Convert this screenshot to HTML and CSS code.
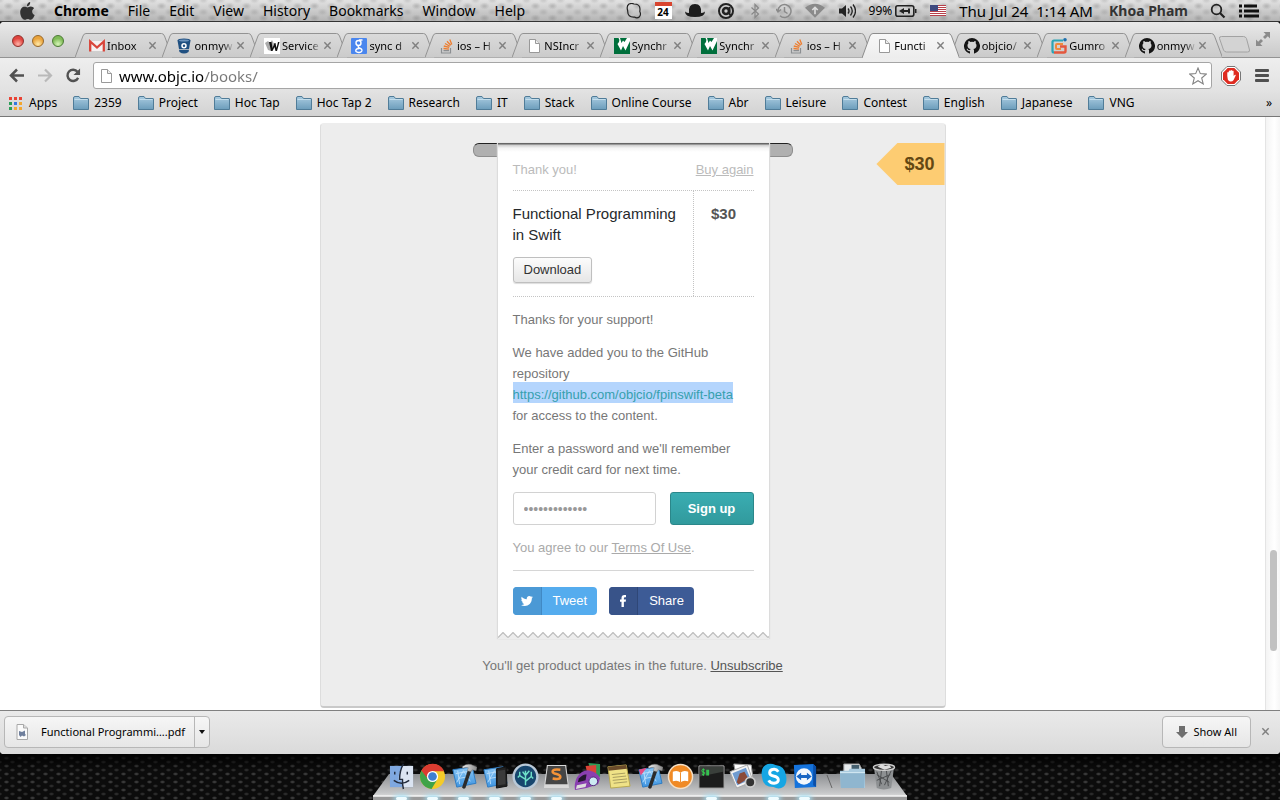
FILE: index.html
```html
<!DOCTYPE html>
<html lang="en">
<head>
<meta charset="utf-8">
<title>Functional Programming in Swift</title>
<link rel="stylesheet" href="styles.css">
</head>
<body>
<svg class="defs" aria-hidden="true">
  <defs>
    <linearGradient id="gFolder" x1="0" y1="0" x2="0" y2="1"><stop offset="0" stop-color="#a9cbe0"/><stop offset="1" stop-color="#6c9dbb"/></linearGradient>
    <linearGradient id="gTab" x1="0" y1="0" x2="0" y2="1"><stop offset="0" stop-color="#dadada"/><stop offset="1" stop-color="#cbcbcb"/></linearGradient>
    <linearGradient id="gTabOn" x1="0" y1="0" x2="0" y2="1"><stop offset="0" stop-color="#f8f8f8"/><stop offset="1" stop-color="#ededed"/></linearGradient>
    <linearGradient id="gShelf" x1="0" y1="0" x2="0" y2="1"><stop offset="0" stop-color="#8d8f92"/><stop offset=".85" stop-color="#c6c7c8"/><stop offset="1" stop-color="#d8d8d8"/></linearGradient>
    <linearGradient id="gBlue" x1="0" y1="0" x2="0" y2="1"><stop offset="0" stop-color="#8cc8f6"/><stop offset="1" stop-color="#3e94e0"/></linearGradient>
    <linearGradient id="gSteel" x1="0" y1="0" x2="1" y2="0"><stop offset="0" stop-color="#eee"/><stop offset="1" stop-color="#888"/></linearGradient>
  </defs>
  <symbol id="folder" viewBox="0 0 16 14"><path d="M.5 13.500V2q0-1.500 1.500-1.500h4L7.500 2.500H15q.5 0 .5.5v10.500z" fill="url(#gFolder)" stroke="#507c98"/><path d="M1.500 3.500h13" stroke="#c4deec"/></symbol>
  <symbol id="page" viewBox="0 0 16 16"><path d="M3.500 1.500h6l4 4v9h-10z" fill="#fff" stroke="#999"/><path d="M9.500 1.500v4h4" fill="#eee" stroke="#999"/></symbol>
  <symbol id="close" viewBox="0 0 10 10"><path d="M1.500 1.500l7 7M8.500 1.500l-7 7" stroke="#808080" stroke-width="1.600"/></symbol>
  <symbol id="stack" viewBox="0 0 16 16"><path d="M2.500 10v5h9v-5M4.500 12.700h5.500" fill="none" stroke="#8c8f92" stroke-width="1.200"/><path d="M4.500 10.500l5.500.6M4.800 8l5.400 1.400M6 5.500l4.800 2.800M8 3.200l3.800 4M10.800 1.500l2 5" stroke="#ee7d2f" stroke-width="1.300"/></symbol>
  <symbol id="synch" viewBox="0 0 16 16"><path fill="#006f3c" d="M0 0h16v16H0z"/><path d="M1.500 0h3q1.500 1.500.5 4l-1.500 2 3.500 6.500L9 8l2.500 4.500L16 3V0h-3l-2.500 4L9 2.500 7.500 5 6 0z" fill="#fff"/></symbol>
  <symbol id="octo" viewBox="0 0 16 16"><path fill="#151515" fill-rule="evenodd" d="M8 0a8 8 0 0 0-2.500 15.600c.4.100.5-.2.500-.4v-2c-2.200.4-2.800-.9-3.300-1.900-.3-.5.8-.7 1.200.1.500.8 1.200.9 2.100.6.100-.5.400-.9.700-1.100C4.900 10.700 3.500 10 3.500 7.500c0-.9.300-1.600.9-2.200-.2-.5-.3-1.300.1-2.200.8 0 1.500.5 2 .9a7 7 0 0 1 3 0c.5-.4 1.200-.9 2-.9.4.9.300 1.700.1 2.200.6.600.9 1.300.9 2.200 0 2.500-1.400 3.200-3.200 3.400.4.300.7.800.7 1.600v2.700c0 .2.100.5.500.4A8 8 0 0 0 8 0z"/></symbol>
  <symbol id="tab" viewBox="0 0 98 25" preserveAspectRatio="none"><path d="M0 24.500L8 3q1-2.500 3-2.500h76q2 0 3 2.500l8 21.500" fill="url(#gTab)" stroke="#939393"/></symbol>
  <symbol id="tabOn" viewBox="0 0 98 25" preserveAspectRatio="none"><path d="M0 25L8 3q1-2.500 3-2.500h76q2 0 3 2.500l8 22" fill="url(#gTabOn)" stroke="#8c8c8c"/></symbol>
  <symbol id="blueprint" viewBox="0 0 28 28"><path d="M3 7l20-3 4 17-20 4z" fill="url(#gBlue)" stroke="#2d7cc4"/><path d="M7 20L14 8l7 11M9 16l11-2M6 11l17-3M10 22L8 8" fill="none" stroke="#bfe1fb" stroke-width=".9"/></symbol>
  <symbol id="hammer" viewBox="0 0 28 28"><path d="M19 6l3.500 1-6.500 19q-2 1.500-3.500-.5z" fill="#2b2b2b"/><path d="M13 3.500q6-4 11-1l4 2-1 3.500-4-1-1 2-4-1 1-3q-3-1-6 .5z" fill="url(#gSteel)" stroke="#777" stroke-width=".5"/></symbol>
</svg>

<header class="menubar">
  <nav class="menus" aria-label="Menu bar">
    <svg class="apple" viewBox="0 0 15 18"><path fill="#333" d="M10.200 0q.2 2-1 3.200T6.900 4.300Q6.700 2.600 7.900 1.300T10.200 0zM7.500 5.400c.8 0 1.800-.9 3.300-.9 1.300 0 2.600.7 3.300 1.800-2.900 1.700-2.400 5.700.6 6.800-.9 2.300-2.300 4.700-3.900 4.700-1.200 0-1.700-.8-3.100-.8s-2 .8-3.100.8C2.500 17.800.2 14 .2 10.300c0-3.600 2.100-5.600 4.300-5.600 1.300 0 2.200.7 3 .7z"/></svg>
    <button class="menu menu-app">Chrome</button><button class="menu">File</button><button class="menu">Edit</button><button class="menu">View</button><button class="menu">History</button><button class="menu">Bookmarks</button><button class="menu">Window</button><button class="menu">Help</button>
  </nav>
  <div class="status">
    <svg class="s16" viewBox="0 0 16 16"><path d="M3 1q3-1 5 0 6 0 6 5 0 1-.2 2.500 1.500 3-.3 5.200-2.500 2-5 .3-7 .5-6.800-6.200Q.2 3 3 1z" fill="none" stroke="#222" stroke-width="1.200"/></svg>
    <span class="cal">24</span>
    <svg class="hat" viewBox="0 0 20 14"><path d="M4 9Q3 0 10 0t6 9q2 0 4-1.500 0 5.500-10 5.500T0 7.500Q2 9 4 9z" fill="#1c1c1c"/></svg>
    <svg class="s16" viewBox="0 0 16 16"><circle cx="8" cy="8" r="7" fill="#ccc" stroke="#222" stroke-width="2"/><circle cx="8" cy="8" r="3" fill="none" stroke="#222" stroke-width="2.600"/><path d="M11.500 4v7l1.500 2" fill="none" stroke="#222" stroke-width="2"/></svg>
    <svg class="s16" viewBox="0 0 16 16"><path d="M4.500 4.500l7 6.500L8 14.500v-13L11.500 5l-7 6.500" fill="none" stroke="#888" stroke-width="1.200"/></svg>
    <svg class="s16" viewBox="0 0 16 16"><path d="M2 8a6.500 6.500 0 1 1 2 4.700M0 6l2 3 3-2.500M8.500 4v4.500l3 2" fill="none" stroke="#8a8a8a" stroke-width="1.500"/></svg>
    <svg class="wifi" viewBox="0 0 22 16"><path d="M0 5Q11-4 22 5L11 16z" fill="#8a8a8a"/><path d="M11 12V5M8 7.500l3-3 3 3" fill="none" stroke="#ddd" stroke-width="1.800"/></svg>
    <svg class="s18" viewBox="0 0 18 16"><path d="M1 5.500h3L8 2v12L4 10.500H1z" fill="#222"/><path d="M10 5.500q2 2.500 0 5M12.500 3.500q3.500 4.500 0 9M15 1.500q5 6.500 0 13" fill="none" stroke="#222" stroke-width="1.300"/></svg>
    <span class="pct">99%</span>
    <svg class="batt" viewBox="0 0 22 12"><rect x=".8" y=".8" width="18" height="10.400" rx="2" fill="none" stroke="#222" stroke-width="1.600"/><path d="M20 4h1.500v4H20zM4 6l5-3v2h4V3.500h2v5h-2V7H9v2z" fill="#222"/></svg>
    <svg class="flag" viewBox="0 0 16 11"><path fill="#fff" d="M0 0h16v11H0z"/><path d="M0 .5h16M0 2.500h16M0 4.500h16M0 6.500h16M0 8.500h16M0 10.500h16" stroke="#b7404a"/><path fill="#3f4a80" d="M0 0h8v6H0z"/></svg>
    <span class="clock">Thu Jul 24&nbsp; 1:14 AM</span>
    <span class="user">Khoa Pham</span>
    <svg class="s16 spot" viewBox="0 0 16 16"><circle cx="6.500" cy="6.500" r="4.800" fill="none" stroke="#222" stroke-width="1.800"/><path d="M10 10l4.500 4.500" stroke="#222" stroke-width="2.200"/></svg>
    <svg class="list" viewBox="0 0 21 14"><path d="M0 2h3M0 7h3M0 12h3M5 2h13M5 7h15M5 12h15" stroke="#111" stroke-width="2.800"/></svg>
  </div>
</header>

<div class="window">
  <div class="tabstrip">
    <div class="lights"><button class="light red" aria-label="Close window"></button><button class="light amber" aria-label="Minimise"></button><button class="light green" aria-label="Zoom"></button></div>
    <div class="tabs">
      <div class="tab"><svg class="shape"><use href="#tab"/></svg><svg class="s16" viewBox="0 0 16 16"><path d="M1 3h14v10H1z" fill="#f4f0f0"/><path d="M1.200 13.500V3.500L8 9.500l6.800-6v10" fill="none" stroke="#d9453a" stroke-width="2.300"/></svg><span class="label">Inbox</span><svg class="x"><use href="#close"/></svg></div>
      <div class="tab"><svg class="shape"><use href="#tab"/></svg><svg class="s16" viewBox="0 0 16 16"><path d="M1.500 2.500q0-2 6.500-2t6.500 2L13 11H3z" fill="#205081"/><path d="M3 11.800h10L12.500 14q-4.500 3-9 0z" fill="#205081"/><ellipse cx="8" cy="2.600" rx="5" ry="1" fill="#6d93bb"/><circle cx="8" cy="7.700" r="2" fill="none" stroke="#fff" stroke-width="1.500"/></svg><span class="label">onmyw</span><svg class="x"><use href="#close"/></svg></div>
      <div class="tab"><svg class="shape"><use href="#tab"/></svg><svg class="s16" viewBox="0 0 16 16"><path fill="#fff" d="M0 0h16v16H0z"/><path d="M1 5l3-2 2 2 2-3 2 4-3 7-3-1z" fill="#aaa"/><path d="M5 4h2.500l1 6 2-5h1l1 5 1.500-6h1.500l-2.500 9h-1.500L10.500 9l-2 4H7z" fill="#111"/></svg><span class="label">Service</span><svg class="x"><use href="#close"/></svg></div>
      <div class="tab"><svg class="shape"><use href="#tab"/></svg><svg class="s16" viewBox="0 0 16 16"><rect width="16" height="16" rx="1" fill="#4a86ee"/><circle cx="7.500" cy="5" r="2.500" fill="none" stroke="#fff" stroke-width="1.400"/><path d="M11.500 2H8M8 7.500q-2 1.500.5 2.500 3 1 2.300 3-.8 1.800-3.300 1.500-3-.3-2.700-2.200.4-1.800 3.700-1.800" fill="none" stroke="#fff" stroke-width="1.400"/></svg><span class="label">sync d</span><svg class="x"><use href="#close"/></svg></div>
      <div class="tab"><svg class="shape"><use href="#tab"/></svg><svg class="s16"><use href="#stack"/></svg><span class="label">ios – H</span><svg class="x"><use href="#close"/></svg></div>
      <div class="tab"><svg class="shape"><use href="#tab"/></svg><svg class="s16"><use href="#page"/></svg><span class="label">NSIncr</span><svg class="x"><use href="#close"/></svg></div>
      <div class="tab"><svg class="shape"><use href="#tab"/></svg><svg class="s16"><use href="#synch"/></svg><span class="label">Synchr</span><svg class="x"><use href="#close"/></svg></div>
      <div class="tab"><svg class="shape"><use href="#tab"/></svg><svg class="s16"><use href="#synch"/></svg><span class="label">Synchr</span><svg class="x"><use href="#close"/></svg></div>
      <div class="tab"><svg class="shape"><use href="#tab"/></svg><svg class="s16"><use href="#stack"/></svg><span class="label">ios – H</span><svg class="x"><use href="#close"/></svg></div>
      <div class="tab tab-on"><svg class="shape"><use href="#tabOn"/></svg><svg class="s16"><use href="#page"/></svg><span class="label">Functi</span><svg class="x"><use href="#close"/></svg></div>
      <div class="tab"><svg class="shape"><use href="#tab"/></svg><svg class="s16"><use href="#octo"/></svg><span class="label">objcio/</span><svg class="x"><use href="#close"/></svg></div>
      <div class="tab"><svg class="shape"><use href="#tab"/></svg><svg class="s16" viewBox="0 0 16 16"><path d="M12 2.500H3Q1.500 2.500 1.500 4v9q0 1.500 1.500 1.500" fill="none" stroke="#2ba5b5" stroke-width="2.200"/><path d="M3 14.500h10q1.500 0 1.500-1.500V8.500H9" fill="none" stroke="#e4573d" stroke-width="2.400"/><path d="M12 6H6q-1 0-1 1v3q0 1 1 1h4" fill="none" stroke="#ef8a3c" stroke-width="2"/><circle cx="14" cy="1.800" r="1.800" fill="#1c6fae"/></svg><span class="label">Gumro</span><svg class="x"><use href="#close"/></svg></div>
      <div class="tab"><svg class="shape"><use href="#tab"/></svg><svg class="s16"><use href="#octo"/></svg><span class="label">onmyw</span><svg class="x"><use href="#close"/></svg></div>
    </div>
    <button class="newtab" aria-label="New tab"><svg viewBox="0 0 32 17"><path d="M3.500.5h22q2 0 3 2l3 11.500q.5 2-2 2h-21q-2 0-3-2l-4-11.500q-.5-2 2-2z" fill="#d3d3d3" stroke="#a2a2a2"/></svg></button>
    <svg class="expand" viewBox="0 0 14 14"><path d="M7.500 0H14v6.500l-2.200-2.200-2.800 2.800L7 5.100l2.800-2.900zM6.500 14H0V7.500l2.200 2.200L5 6.900 7 8.900l-2.800 2.900z" fill="#8b8b8b"/></svg>
  </div>

  <div class="toolbar">
    <button class="nav" aria-label="Back"><svg viewBox="0 0 16 14"><path d="M8 1L2 7l6 6M2 7h13" fill="none" stroke="#525252" stroke-width="2.500"/></svg></button>
    <button class="nav" aria-label="Forward"><svg viewBox="0 0 16 14"><path d="M8 1l6 6-6 6M14 7H1" fill="none" stroke="#b9b9b9" stroke-width="2.200"/></svg></button>
    <button class="nav" aria-label="Reload"><svg viewBox="0 0 16 16"><path d="M13.500 10.500a6 6 0 1 1-.7-6.500" fill="none" stroke="#525252" stroke-width="2.600"/><path d="M15.500.5V7.500h-7z" fill="#525252"/></svg></button>
    <div class="omnibox">
      <svg class="s16"><use href="#page"/></svg>
      <input class="url" type="text" aria-label="Address" value="www.objc.io/books/">
      <svg class="s18" viewBox="0 0 18 18"><path d="M9 1l2.300 5.600 6 .5-4.600 3.900 1.500 5.900L9 13.700l-5.200 3.200 1.500-5.900L.7 7.100l6-.5z" fill="#fff" stroke="#838383" stroke-width="1.100"/></svg>
    </div>
    <svg class="adblock" viewBox="0 0 20 20"><path d="M6 .5h8L19.500 6v8L14 19.500H6L.5 14V6z" fill="#fff" stroke="#777"/><path d="M6.700 2h6.600L18 6.700v6.600L13.300 18H6.700L2 13.300V6.700z" fill="#df2b20"/><path d="M6.300 10V6.500q.7-1 1.500 0V5q.8-1 1.600 0V4.500q.8-1 1.600 0V5q.8-1 1.600 0v5l1.300-1.300q1-.3.9.6L12.600 14q-1 1.500-3 1.500T6.800 13.500z" fill="#fff"/></svg>
    <button class="nav burger" aria-label="Chrome menu"><svg viewBox="0 0 14 13"><path d="M1 1.500h12M1 6.500h12M1 11.500h12" stroke="#505050" stroke-width="2.800" stroke-linecap="round"/></svg></button>
  </div>

  <nav class="bookmarks" aria-label="Bookmarks">
    <a href="#" class="bm"><svg class="grid" viewBox="0 0 13 13"><path d="M0 0h3v3H0zM5 0h3v3H5zM10 0h3v3h-3z" fill="#e94335"/><path d="M0 5h3v3H0z" fill="#2a9d57"/><path d="M5 5h3v3H5z" fill="#3577e0"/><path d="M10 5h3v3h-3zM5 10h3v3H5zM10 10h3v3h-3z" fill="#f3a62e"/><path d="M0 10h3v3H0z" fill="#2a9d57"/></svg>Apps</a>
    <a href="#" class="bm"><svg class="fold"><use href="#folder"/></svg>2359</a>
    <a href="#" class="bm"><svg class="fold"><use href="#folder"/></svg>Project</a>
    <a href="#" class="bm"><svg class="fold"><use href="#folder"/></svg>Hoc Tap</a>
    <a href="#" class="bm"><svg class="fold"><use href="#folder"/></svg>Hoc Tap 2</a>
    <a href="#" class="bm"><svg class="fold"><use href="#folder"/></svg>Research</a>
    <a href="#" class="bm"><svg class="fold"><use href="#folder"/></svg>IT</a>
    <a href="#" class="bm"><svg class="fold"><use href="#folder"/></svg>Stack</a>
    <a href="#" class="bm"><svg class="fold"><use href="#folder"/></svg>Online Course</a>
    <a href="#" class="bm"><svg class="fold"><use href="#folder"/></svg>Abr</a>
    <a href="#" class="bm"><svg class="fold"><use href="#folder"/></svg>Leisure</a>
    <a href="#" class="bm"><svg class="fold"><use href="#folder"/></svg>Contest</a>
    <a href="#" class="bm"><svg class="fold"><use href="#folder"/></svg>English</a>
    <a href="#" class="bm"><svg class="fold"><use href="#folder"/></svg>Japanese</a>
    <a href="#" class="bm"><svg class="fold"><use href="#folder"/></svg>VNG</a>
    <button class="more" aria-label="More bookmarks">»</button>
  </nav>

  <div class="viewport">
    <main class="page">
      <section class="panel">
        <div class="tag">$30</div>
        <div class="slot">
          <div class="receipt">
            <div class="head"><span>Thank you!</span><a href="#">Buy again</a></div>
            <div class="item">
              <div class="name"><h1>Functional Programming in Swift</h1><button class="download">Download</button></div>
              <strong class="price">$30</strong>
            </div>
            <p>Thanks for your support!</p>
            <p>We have added you to the GitHub repository <a class="repo" href="#">https://github.com/objcio/fpinswift-beta</a> for access to the content.</p>
            <p><label for="pw">Enter a password and we'll remember your credit card for next time.</label></p>
            <form class="signup"><input id="pw" class="pw" type="password" placeholder="•••••••••••••"><button class="go" type="button">Sign up</button></form>
            <p class="terms">You agree to our <a href="#">Terms Of Use</a>.</p>
            <div class="share">
              <button class="social tweet"><span class="ic"><svg viewBox="0 0 12 10"><path d="M12 1.200l-1.200 1.300C11 7 7.500 10 3.800 10 2.300 10 1 9.600 0 8.900c1.300.1 2.500-.2 3.400-1C2.400 7.800 1.500 7.200 1.200 6.200h1C1.100 5.900.3 5 .3 3.800l1 .3C.3 3.300 0 2 .7.700c1.200 1.500 3 2.400 5.100 2.500C5.400 1.300 6.700 0 8.300 0c.7 0 1.300.3 1.800.8L11.600.2l-1 1.300z" fill="#fff"/></svg></span><span class="tx">Tweet</span></button>
              <button class="social fb"><span class="ic"><svg viewBox="0 0 12 12"><path d="M4.500 12V6.700H3V4.600h1.500V3q0-2.900 2.900-2.900H9v2.100H7.900q-1 0-1 1v1.400H9l-.3 2.100H6.900V12z" fill="#fff"/></svg></span><span class="tx">Share</span></button>
            </div>
            <svg class="tear" aria-hidden="true"><defs><pattern id="zig" width="10" height="7" patternUnits="userSpaceOnUse"><path d="M0 0v5.500L5 .5l5 5V0z" fill="#fff"/><path d="M0 5.500L5 .5l5 5" fill="none" stroke="#bcbcbc" stroke-width="1.200"/></pattern></defs><rect width="100%" height="7" fill="url(#zig)"/></svg>
          </div>
        </div>
        <p class="updates">You'll get product updates in the future. <a href="#">Unsubscribe</a></p>
      </section>
    </main>
    <div class="scroll"><div class="thumb"></div></div>
  </div>

  <footer class="shelf">
    <div class="file">
      <button class="file-open"><svg class="s16" viewBox="0 0 16 16"><path d="M3 .5h6.500L13.500 4v11.500H3z" fill="#fafafa" stroke="#a8a8a8"/><path d="M9.500.5V4h4" fill="#ddd" stroke="#a8a8a8"/><path d="M5 7l3 1 3-1.500V10l1 1-2 1.500-2-1L6.500 13 5 11z" fill="#6f7f9c"/></svg>Functional Programmi….pdf</button>
      <button class="file-menu" aria-label="Download options"><svg viewBox="0 0 6 4"><path d="M0 0h6L3 4z" fill="#111"/></svg></button>
    </div>
    <button class="showall"><svg viewBox="0 0 12 12"><path d="M3 0h6v6h3l-6 6-6-6h3z" fill="#6e6e6e"/></svg>Show All</button>
    <button class="shut" aria-label="Close downloads bar"><svg viewBox="0 0 10 10"><use href="#close"/></svg></button>
  </footer>
</div>

<div class="desktop">
  <div class="dock">
    <svg class="base" viewBox="0 0 534 26" preserveAspectRatio="none"><path d="M16 0h502l16 22H0z" fill="url(#gShelf)"/><path d="M0 22h534v4H0z" fill="#9b9b9b"/><path d="M0 22h534" stroke="#f4f4f4" stroke-width="1.500"/></svg>
    <span class="app on"><svg viewBox="0 0 28 28"><path d="M2 3h24v22H2z" fill="#7fa8e0"/><path d="M15 3h11v22H15l-1-7h-3q0-8 4-15" fill="#dbe4f2"/><path d="M16 1q-4 7-4 16h3q0 6 1 10M7 9v3M20 9v3M6 18q8 6 16 0" fill="none" stroke="#222b3c" stroke-width="1.500"/></svg></span>
    <span class="app on"><svg viewBox="0 0 28 28"><circle cx="14" cy="14" r="13" fill="#f4cb28"/><path d="M2.500 8A13 13 0 0 1 26 8.500H14L8 17z" fill="#db3c31"/><path d="M2.500 8A13 13 0 0 0 13 27L18.500 18 9 16z" fill="#3fa348"/><circle cx="14" cy="14" r="5.800" fill="#fff"/><circle cx="14" cy="14" r="4.500" fill="#3f7fd0"/></svg></span>
    <span class="app on"><svg viewBox="0 0 28 28"><use href="#blueprint"/><use href="#hammer"/></svg></span>
    <span class="app on"><svg viewBox="0 0 28 28"><use href="#blueprint"/><path d="M16 6l10-2 1 20-11 2z" fill="#222" stroke="#111"/><path d="M17.500 8l7.500-1 .5 15-8 1z" fill="#3a3a3a"/></svg></span>
    <span class="app on"><svg viewBox="0 0 28 28"><circle cx="14" cy="14" r="12.300" fill="#17466e" stroke="#b9c9d8" stroke-width="2.500"/><path d="M14 23V8M14 17l-6-4V9M14 19l6-5V9M14 13l-3-4M14 13l4-5M8 13l-2 2M20 14l2 2" fill="none" stroke="#6ee0c8" stroke-width="1.500"/></svg></span>
    <span class="app on"><svg viewBox="0 0 28 28"><path d="M4 2h20l3 24H1z" fill="#d9d9d9"/><path d="M5 3h18l2.500 19h-23z" fill="#454545"/><path d="M18 7q-8-1-8 2 0 1.500 4 2.500t4 3q0 3-8 1.500" fill="none" stroke="#f39237" stroke-width="2.600"/></svg></span>
    <span class="app"><svg viewBox="0 0 28 28"><path d="M15 0l12 1v13l-8 3z" fill="#2f9a57"/><path d="M12 3l11-1v12l-8 2z" fill="#db4437"/><path d="M3 15q6-9 14-7t10 8l-2 6-12 4-12 2q-1-7 2-13z" fill="#8a3fb0"/><path d="M5 16q5-5 8-4l-1 6-8 2z" fill="#23172e"/><circle cx="20" cy="19" r="4.500" fill="#cceaf2" stroke="#4f2a78"/><path d="M3 23l10-2-1 4-10 2z" fill="#ddd"/></svg></span>
    <span class="app"><svg viewBox="0 0 28 28"><path d="M3 4l19-2 4 22-20 2z" fill="#efe287" stroke="#b8a94e"/><path d="M3 4l19-2 .7 4-19 2z" fill="#6a4b2a"/><path d="M7 12l14-1.500M8 15l14-1.500M8 18l15-1.500M9 21l14-1.500" stroke="#a59b5e"/></svg></span>
    <span class="app"><svg viewBox="0 0 28 28"><use href="#blueprint"/><path d="M3 7l8-2-6 8z" fill="#e64a83"/><use href="#hammer"/></svg></span>
    <span class="app"><svg viewBox="0 0 28 28"><circle cx="14" cy="14" r="12.500" fill="#f08a25" stroke="#f4e0c8" stroke-width="1.500"/><path d="M6 9q5-2 8 1 3-3 8-1v10q-5-1.500-8 1-3-2.500-8-1z" fill="#fff"/><path d="M14 10v10" stroke="#f08a25"/></svg></span>
    <span class="app on"><svg viewBox="0 0 28 28"><path d="M1 3h26v23H1z" fill="#1c1c1c" stroke="#aaa"/><path d="M2 4h24v5L2 14z" fill="#3a3f3b"/><path d="M7 7q-3-1-3 1t3 2q0 3-3 1.500M5.500 5.500v8" fill="none" stroke="#35d04f"/><path d="M8.500 7h3v6h-3z" fill="#35c04f"/></svg></span>
    <span class="app"><svg viewBox="0 0 28 28"><path d="M5 1l18 1 2 15-16 4z" fill="#fff" stroke="#999"/><path d="M1 9l18-7 6 17-17 7z" fill="#f4f4f4" stroke="#aaa"/><path d="M3.500 10.500l14-5.500 5 12-14 6z" fill="#6f9bd0"/><path d="M8 20l3-9 5-2 4 7-10 6z" fill="#8a4a38"/><circle cx="22" cy="20" r="5" fill="#333" stroke="#ccc" stroke-width="1.800"/></svg></span>
    <span class="app on"><svg viewBox="0 0 28 28"><path d="M8 1q4-1 8 1 10 1 11 11 2 10-5 13-4 1-8-1Q3 25 2 14 0 4 8 1z" fill="#16a6e4"/><path d="M19 9q-2-3-5-2.500-4 .5-4 3.500 0 2.500 4 3.500 5 1 5 4 0 3-4.500 3.500-4 0-5.500-3" fill="none" stroke="#fff" stroke-width="3"/></svg></span>
    <span class="app on"><svg viewBox="0 0 28 28"><path d="M3 2l20-1 3 3v21l-22 1z" fill="#1573dc"/><path d="M23 1l3 3v21l-3-2z" fill="#0b4fa8"/><circle cx="13.500" cy="14" r="8.500" fill="#f2f7fc"/><path d="M5.500 14l5-4v2.500h6V10l5 4-5 4v-2.500h-6V18z" fill="#1966c4"/></svg></span>
    <svg class="split" viewBox="0 0 17 28"><path d="M7 8l5 13" stroke="#666"/></svg>
    <span class="app"><svg viewBox="0 0 28 28"><path d="M5 1h16l2 4v8H5z" fill="#e6eaec" stroke="#999"/><path d="M13 2h8v5h-8z" fill="#45606f"/><path d="M1 8h9l1-2h16v20H2z" fill="#aacbdf"/><path d="M1 10h26l-1 16H2z" fill="#8fb6cf"/><path d="M1 10h26" stroke="#d8ebf5"/></svg></span>
    <span class="app"><svg viewBox="0 0 28 28"><path d="M4 4h21l-3 22q-8 3-15 0z" fill="#8d9092"/><path d="M7 9l5 13M12 7l-2 17M17 8l2 16M22 8l-7 15M7 18l14-6M7 12l13 8" stroke="#4b4d4f"/><ellipse cx="14.500" cy="4.500" rx="11" ry="3.200" fill="#3a3a3a" stroke="#cfcfcf" stroke-width="1.400"/><path d="M8 4l4-3 4 2 4-1 2 3-7 2z" fill="#ddd"/></svg></span>
  </div>
</div>
</body>
</html>
```
FILE: styles.css
```css
* { box-sizing: border-box; }

body {
  margin: 0;
  min-height: 100vh;
  display: flex;
  flex-direction: column;
  background: #111;
  font-family: "Noto Sans", "Open Sans", sans-serif;
  color: #000;
}

button {
  font: inherit;
  color: inherit;
  margin: 0;
  padding: 0;
  border: 0;
  background: none;
}

svg { flex: none; display: block; }
.defs { position: absolute; width: 0; height: 0; }
.s16 { width: 16px; height: 16px; }
.s18 { width: 18px; height: 18px; }

/* menu bar */
.menubar {
  height: 22px;
  display: flex;
  justify-content: space-between;
  align-items: center;
  padding: 0 20px;
  border-bottom: 1px solid #333;
  background:
    radial-gradient(ellipse at center, rgba(110, 110, 110, .28) 0 1px, transparent 5px) 0 0 / 17px 12px,
    radial-gradient(ellipse at center, rgba(110, 110, 110, .2) 0 1px, transparent 5px) 8px 6px / 17px 12px,
    linear-gradient(#e2e2e2, #b4b4b4);
  font-size: 14px;
  line-height: 20px;
}
.menus { display: flex; align-items: center; gap: 19px; }
.menus .apple { width: 15px; height: 18px; }
.menu-app { font-weight: bold; }
.status { display: flex; align-items: center; gap: 13px; }
.cal {
  width: 17px;
  height: 17px;
  border-top: 4px solid #d8452f;
  background: #fff;
  font-size: 10px;
  font-weight: bold;
  line-height: 13px;
  text-align: center;
}
.hat { width: 20px; height: 14px; }
.wifi { width: 20px; height: 15px; }
.batt { width: 22px; height: 12px; margin-left: -10px; }
.pct { font-size: 12px; }
.flag { width: 16px; height: 11px; }
.clock { font-size: 15px; margin-right: 3px; }
.user { font-weight: bold; color: #333; }
.spot { margin-left: 9px; }
.list { width: 21px; height: 14px; }

/* browser window */
.window {
  flex: 1;
  display: flex;
  flex-direction: column;
  background: #fff;
  border-radius: 4px;
  overflow: hidden;
}
.tabstrip {
  display: flex;
  align-items: flex-end;
  height: 36px;
  padding: 0 10px 0 12px;
  background: linear-gradient(#e9e9e9, #c9c9c9);
  border-bottom: 1px solid #939393;
}
.lights { display: flex; gap: 8px; height: 22px; margin-right: 14px; }
.light {
  width: 12px;
  height: 12px;
  border-radius: 50%;
  border: 1px solid #777;
}
.red { background: radial-gradient(circle at 50% 80%, #ffb3a8, #e0443e 60%); border-color: #8f2f2b; }
.amber { background: radial-gradient(circle at 50% 80%, #ffe9a8, #e9a33b 60%); border-color: #98682a; }
.green { background: radial-gradient(circle at 50% 80%, #d6f5b8, #7fbb57 60%); border-color: #4b7a35; }
.tabs { flex: 1; min-width: 0; display: flex; height: 25px; margin-bottom: -1px; }
.tab {
  position: relative;
  flex: 1 1 0;
  min-width: 0;
  display: flex;
  align-items: center;
  padding: 0 0 0 11px;
  font-size: 11px;
  line-height: 20px;
}
.tab > * { position: relative; }
.tab .shape {
  position: absolute;
  top: 0;
  left: -3px;
  width: calc(100% + 10px);
  height: 25px;
}
.tab-on { z-index: 1; }
.label {
  flex: 1;
  min-width: 0;
  margin: 0 2px;
  overflow: hidden;
  white-space: nowrap;
  -webkit-mask-image: linear-gradient(90deg, #000 70%, transparent);
  mask-image: linear-gradient(90deg, #000 70%, transparent);
}
.x { width: 9px; height: 9px; margin-right: 8px; }
.newtab { margin: 0 6px 4px 3px; }
.newtab svg { width: 32px; height: 17px; }
.expand { width: 14px; height: 14px; margin-bottom: 11px; }

.toolbar {
  display: flex;
  align-items: center;
  gap: 12px;
  height: 33px;
  padding: 2px 11px 0 9px;
  background: linear-gradient(#eee, #e2e2e2);
}
.nav svg { width: 16px; height: 15px; }
.omnibox {
  flex: 1;
  display: flex;
  align-items: center;
  height: 27px;
  padding: 0 4px;
  border: 1px solid #a5a5a5;
  border-radius: 3px;
  background: #fff;
}
.url {
  flex: 1;
  min-width: 0;
  padding: 0;
  margin-left: 5px;
  border: 0;
  outline: 0;
  font: 15px/24px "Noto Sans", sans-serif;
  background: linear-gradient(90deg, #000 86px, #777 86px);
  -webkit-background-clip: text;
  background-clip: text;
  -webkit-text-fill-color: transparent;
}
.adblock { width: 20px; height: 20px; margin: 0 2px 0 -3px; }
.burger svg { width: 14px; height: 13px; }

.bookmarks {
  display: flex;
  align-items: center;
  gap: 16px;
  height: 26px;
  padding: 0 8px 1px 9px;
  background: linear-gradient(#e2e2e2, #d2d2d2);
  border-bottom: 1px solid #777;
  font-size: 12px;
  line-height: 20px;
}
.bm {
  display: flex;
  align-items: center;
  gap: 5px;
  color: #000;
  text-decoration: none;
  white-space: nowrap;
}
.grid { width: 13px; height: 13px; margin-right: 2px; }
.fold { width: 16px; height: 14px; }
.more { margin-left: auto; }

/* web page */
.viewport { flex: 1; display: flex; }
.page {
  flex: 1;
  padding: 6px 0 2px;
  font-family: "Liberation Sans", Arial, sans-serif;
  font-size: 13px;
  line-height: 21px;
  color: #777;
}
.panel {
  position: relative;
  max-width: 626px;
  margin: 0 auto;
  padding: 19px 0 30px;
  background: #ededed;
  border: 1px solid #ddd;
  border-top-color: #ededed;
  border-bottom: 2px solid #c9c9c9;
  border-radius: 4px;
}
.tag {
  position: absolute;
  top: 19px;
  right: 0;
  padding: 0 10px 0 28px;
  background: #fdcc72;
  clip-path: polygon(21px 0, 100% 0, 100% 100%, 21px 100%, 0 50%);
  color: #644813;
  font-size: 18px;
  font-weight: bold;
  line-height: 42px;
}
.slot {
  position: relative;
  max-width: 320px;
  margin: 0 auto;
  padding: 0 24px 0 25px;
}
.slot::before {
  content: "";
  position: absolute;
  inset: 0 0 auto;
  height: 12px;
  border: 1px solid #8e8e8e;
  border-top-color: #222;
  border-radius: 6px;
  background: #b0b0b0;
}
.receipt {
  position: relative;
  padding: 16px 15px 0;
  background: linear-gradient(#666 0 1px, #ccc 2px, #f4f4f4 5px, #fff 9px);
  box-shadow: -1px 0 1px #dcdcdc, 1px 0 1px #dcdcdc;
}
.head {
  display: flex;
  justify-content: space-between;
  padding-bottom: 10px;
  border-bottom: 1px dotted #c4c4c4;
  color: #bbb;
}
.receipt a, .updates a { color: inherit; }
.item { display: flex; border-bottom: 1px dotted #c4c4c4; }
.name { flex: 1; padding: 12px 12px 13px 0; border-right: 1px dotted #c4c4c4; }
.name h1 {
  margin: 0 0 12px;
  font-size: 15px;
  font-weight: normal;
  line-height: 21px;
  color: #26292c;
}
.download {
  display: block;
  height: 26px;
  padding: 0 10px;
  border: 1px solid #bfbfbf;
  border-radius: 3px;
  background: linear-gradient(#fcfcfc, #e6e6e6);
  box-shadow: 0 1px 1px #ddd;
  color: #333;
  line-height: 20px;
}
.price { width: 60px; padding: 12px 0; text-align: center; font-size: 15px; color: #555; }
.receipt p { margin: 12px 0 0; padding-right: 8px; }
.receipt .repo {
  background: #b4d5fd;
  color: #36a0ae;
  text-decoration: none;
  padding: 5px 0 1px;
}
.signup { display: flex; gap: 14px; margin-top: 12px; }
.pw {
  flex: 1;
  min-width: 0;
  height: 33px;
  padding: 0 10px;
  border: 1px solid #d2d2d2;
  border-radius: 3px;
  background: #fff;
  font: 14px "Liberation Sans", Arial, sans-serif;
}
.pw::placeholder { color: #999; opacity: 1; }
.go {
  width: 84px;
  border: 1px solid #2b878a;
  border-radius: 3px;
  background: linear-gradient(#3aadb2, #319a9d);
  color: #fff;
  font-weight: bold;
}
.receipt .terms { margin-top: 12px; padding: 0 0 12px; border-bottom: 1px solid #d6d6d6; color: #aaa; }
.share { display: flex; gap: 12px; padding: 16px 0 17px; }
.social { display: flex; height: 28px; border-radius: 4px; overflow: hidden; color: #fff; line-height: 28px; }
.ic { display: flex; align-items: center; justify-content: center; width: 29px; height: 28px; }
.ic svg { width: 12px; height: 12px; }
.tx { padding: 0 10px 0 11px; }
.tweet { background: #55acee; }
.tweet .ic { background: #4b99d5; border-right: 1px solid #4189c4; }
.fb { background: #3d5b96; }
.fb .ic { background: #385389; border-right: 1px solid #2f4777; }
.tear {
  width: calc(100% + 30px);
  height: 7px;
  margin: 0 -15px;
  background: #ededed;
}
.updates { margin: 16px 0 0; text-align: center; }
.updates a { color: #555; }
.scroll {
  width: 15px;
  padding: 433px 3px 0 4px;
  border-left: 1px solid #e4e4e4;
  background: linear-gradient(90deg, #f4f4f4, #fff 60%, #f6f6f6);
}
.thumb { height: 101px; border-radius: 4px; background: #c1c1c1; }

/* downloads bar */
.shelf {
  display: flex;
  align-items: center;
  height: 44px;
  padding: 0 10px 2px 4px;
  border-top: 1px solid #808080;
  background: linear-gradient(#eaeaea, #dadada);
  font-size: 11px;
  line-height: 20px;
}
.file, .showall {
  display: flex;
  align-items: center;
  height: 32px;
  border: 1px solid #b7b7b7;
  border-radius: 4px;
  background: linear-gradient(#f6f6f6, #e6e6e6);
}
.file-open { display: flex; align-items: center; gap: 11px; height: 30px; padding: 0 9px 0 9px; }
.file-menu { height: 30px; padding: 0 4px; border-left: 1px solid #b7b7b7; }
.file-menu svg { width: 6px; height: 4px; }
.showall { margin-left: auto; gap: 6px; padding: 0 13px; }
.showall svg { width: 12px; height: 12px; }
.shut { margin-left: 10px; }
.shut svg { width: 9px; height: 9px; }

/* desktop and dock */
.desktop {
  display: flex;
  justify-content: center;
  height: 46px;
  background:
    linear-gradient(rgba(0, 0, 0, .9), transparent 16px),
    radial-gradient(ellipse, #3a3a3a 0 1px, transparent 3px) 0 0 / 13px 8px,
    radial-gradient(ellipse, #2c2c2c 0 1px, transparent 3px) 6px 4px / 13px 8px,
    #0c0c0c;
}
.dock {
  position: relative;
  display: flex;
  padding: 9px 8px 0 13px;
}
.base { position: absolute; left: 0; bottom: 0; width: 100%; height: 26px; }
.app { position: relative; display: flex; justify-content: center; width: 31px; height: 37px; }
.app svg { width: 27px; height: 27px; }
.on::after {
  content: "";
  position: absolute;
  left: 10px;
  right: 10px;
  bottom: 0;
  height: 3px;
  border-radius: 2px;
  background: #effcff;
  box-shadow: 0 0 5px 2px #a8e0f4;
}
.split { position: relative; width: 17px; height: 28px; margin-top: 4px; }
```
